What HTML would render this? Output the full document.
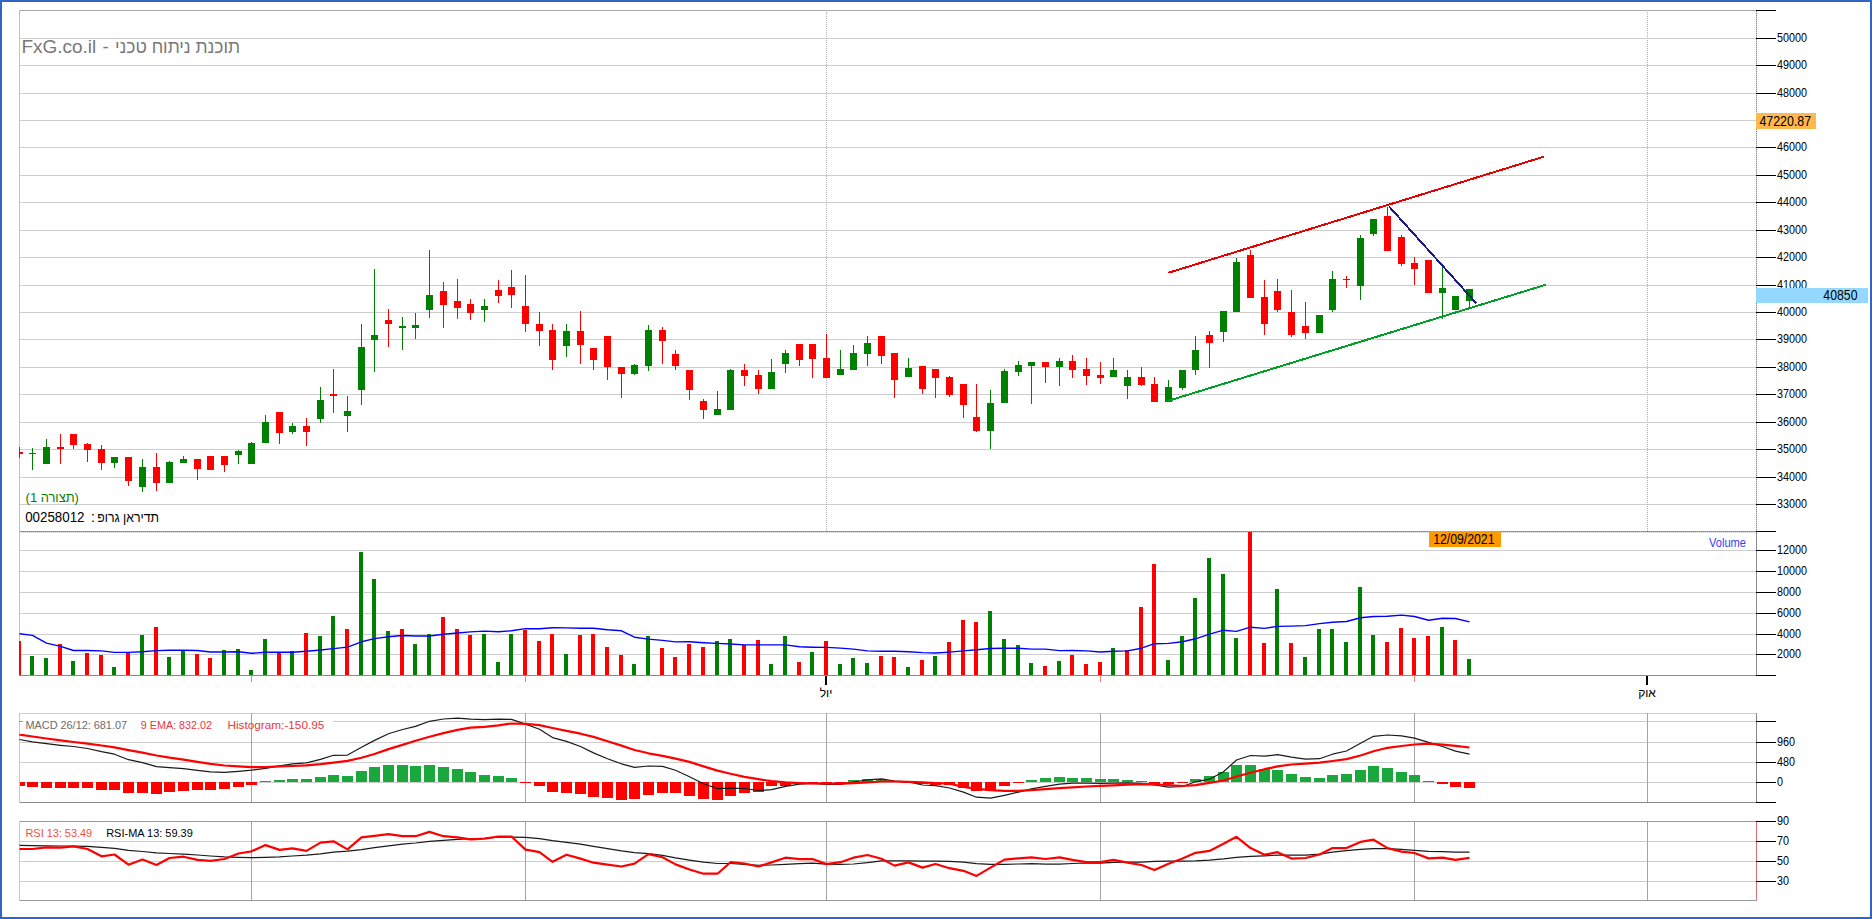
<!DOCTYPE html><html><head><meta charset="utf-8"><title>chart</title><style>html,body{margin:0;padding:0;width:1872px;height:919px;overflow:hidden;background:#fff;}</style></head><body><svg width="1872" height="919" viewBox="0 0 1872 919" style="position:absolute;left:0;top:0;font-family:'Liberation Sans', sans-serif">
<rect x="0" y="0" width="1872" height="919" fill="#ffffff"/>
<g shape-rendering="crispEdges">
<rect x="19" y="38" width="1737" height="1" fill="#cdcdcd"/>
<rect x="19" y="65" width="1737" height="1" fill="#cdcdcd"/>
<rect x="19" y="93" width="1737" height="1" fill="#cdcdcd"/>
<rect x="19" y="120" width="1737" height="1" fill="#cdcdcd"/>
<rect x="19" y="147" width="1737" height="1" fill="#cdcdcd"/>
<rect x="19" y="175" width="1737" height="1" fill="#cdcdcd"/>
<rect x="19" y="202" width="1737" height="1" fill="#cdcdcd"/>
<rect x="19" y="230" width="1737" height="1" fill="#cdcdcd"/>
<rect x="19" y="257" width="1737" height="1" fill="#cdcdcd"/>
<rect x="19" y="285" width="1737" height="1" fill="#cdcdcd"/>
<rect x="19" y="312" width="1737" height="1" fill="#cdcdcd"/>
<rect x="19" y="339" width="1737" height="1" fill="#cdcdcd"/>
<rect x="19" y="367" width="1737" height="1" fill="#cdcdcd"/>
<rect x="19" y="394" width="1737" height="1" fill="#cdcdcd"/>
<rect x="19" y="422" width="1737" height="1" fill="#cdcdcd"/>
<rect x="19" y="449" width="1737" height="1" fill="#cdcdcd"/>
<rect x="19" y="477" width="1737" height="1" fill="#cdcdcd"/>
<rect x="19" y="504" width="1737" height="1" fill="#cdcdcd"/>
<rect x="19" y="10" width="1737" height="1" fill="#a8a8a8"/>
<rect x="19" y="10" width="1" height="521" fill="#c0c0c0"/>
<line x1="826.5" y1="10" x2="826.5" y2="531" stroke="#b0b0b0" stroke-width="1" stroke-dasharray="1 1"/>
<line x1="1647.5" y1="10" x2="1647.5" y2="531" stroke="#b0b0b0" stroke-width="1" stroke-dasharray="1 1"/>
<rect x="1756" y="11" width="1" height="520" fill="#d4d4d4"/>
<line x1="1756.5" y1="11" x2="1756.5" y2="531" stroke="#8a8a8a" stroke-width="1" stroke-dasharray="1 1"/>
<rect x="19" y="531" width="1737" height="1" fill="#a8a8a8"/>
<line x1="19" y1="531.5" x2="1756" y2="531.5" stroke="#808080" stroke-width="1" stroke-dasharray="1 1"/>
<rect x="19" y="532" width="1737" height="1" fill="#e0e0e0"/>
<rect x="19" y="550" width="1737" height="1" fill="#cdcdcd"/>
<rect x="19" y="571" width="1737" height="1" fill="#cdcdcd"/>
<rect x="19" y="592" width="1737" height="1" fill="#cdcdcd"/>
<rect x="19" y="613" width="1737" height="1" fill="#cdcdcd"/>
<rect x="19" y="634" width="1737" height="1" fill="#cdcdcd"/>
<rect x="19" y="654" width="1737" height="1" fill="#cdcdcd"/>
<rect x="19" y="531" width="1" height="145" fill="#c0c0c0"/>
<rect x="1756" y="531" width="1" height="145" fill="#909090"/>
<rect x="19" y="675" width="1738" height="1" fill="#8a8a8a"/>
<rect x="19" y="713" width="1737" height="1" fill="#cfcfcf"/>
<rect x="19" y="802" width="1738" height="1" fill="#8a8a8a"/>
<rect x="19" y="713" width="1" height="90" fill="#c8c8c8"/>
<rect x="1756" y="713" width="1" height="90" fill="#8a8a8a"/>
<rect x="19" y="742" width="1737" height="1" fill="#cdcdcd"/>
<rect x="19" y="762" width="1737" height="1" fill="#cdcdcd"/>
<rect x="19" y="782" width="1737" height="1" fill="#cdcdcd"/>
<rect x="333" y="721" width="1423" height="1" fill="#cdcdcd"/>
<rect x="19" y="721" width="4" height="1" fill="#9a9a9a"/>
<rect x="251" y="713" width="1" height="89" fill="#a4a4a4"/>
<rect x="525" y="713" width="1" height="89" fill="#a4a4a4"/>
<rect x="826" y="713" width="1" height="89" fill="#a4a4a4"/>
<rect x="1100" y="713" width="1" height="89" fill="#a4a4a4"/>
<rect x="1414" y="713" width="1" height="89" fill="#a4a4a4"/>
<rect x="1647" y="713" width="1" height="89" fill="#a4a4a4"/>
<rect x="19" y="821" width="1737" height="1" fill="#9a9a9a"/>
<rect x="19" y="900" width="1738" height="1" fill="#9a9a9a"/>
<rect x="19" y="821" width="1" height="80" fill="#c8c8c8"/>
<rect x="1756" y="821" width="1" height="79" fill="#e07070"/>
<rect x="19" y="841" width="1737" height="1" fill="#cdcdcd"/>
<rect x="19" y="861" width="1737" height="1" fill="#cdcdcd"/>
<rect x="19" y="881" width="1737" height="1" fill="#cdcdcd"/>
<rect x="251" y="821" width="1" height="79" fill="#a4a4a4"/>
<rect x="525" y="821" width="1" height="79" fill="#a4a4a4"/>
<rect x="826" y="821" width="1" height="79" fill="#a4a4a4"/>
<rect x="1100" y="821" width="1" height="79" fill="#a4a4a4"/>
<rect x="1414" y="821" width="1" height="79" fill="#a4a4a4"/>
<rect x="1647" y="821" width="1" height="79" fill="#a4a4a4"/>
<rect x="1756" y="10" width="20" height="1" fill="#000000"/>
<rect x="1756" y="38" width="20" height="1" fill="#000000"/>
<rect x="1756" y="65" width="20" height="1" fill="#000000"/>
<rect x="1756" y="93" width="20" height="1" fill="#000000"/>
<rect x="1756" y="120" width="20" height="1" fill="#000000"/>
<rect x="1756" y="147" width="20" height="1" fill="#000000"/>
<rect x="1756" y="175" width="20" height="1" fill="#000000"/>
<rect x="1756" y="202" width="20" height="1" fill="#000000"/>
<rect x="1756" y="230" width="20" height="1" fill="#000000"/>
<rect x="1756" y="257" width="20" height="1" fill="#000000"/>
<rect x="1756" y="285" width="20" height="1" fill="#000000"/>
<rect x="1756" y="312" width="20" height="1" fill="#000000"/>
<rect x="1756" y="339" width="20" height="1" fill="#000000"/>
<rect x="1756" y="367" width="20" height="1" fill="#000000"/>
<rect x="1756" y="394" width="20" height="1" fill="#000000"/>
<rect x="1756" y="422" width="20" height="1" fill="#000000"/>
<rect x="1756" y="449" width="20" height="1" fill="#000000"/>
<rect x="1756" y="477" width="20" height="1" fill="#000000"/>
<rect x="1756" y="504" width="20" height="1" fill="#000000"/>
<rect x="1756" y="531" width="20" height="1" fill="#000000"/>
<rect x="1756" y="550" width="20" height="1" fill="#000000"/>
<rect x="1756" y="571" width="20" height="1" fill="#000000"/>
<rect x="1756" y="592" width="20" height="1" fill="#000000"/>
<rect x="1756" y="613" width="20" height="1" fill="#000000"/>
<rect x="1756" y="634" width="20" height="1" fill="#000000"/>
<rect x="1756" y="654" width="20" height="1" fill="#000000"/>
<rect x="1756" y="675" width="20" height="1" fill="#000000"/>
<rect x="1756" y="721" width="20" height="1" fill="#000000"/>
<rect x="1756" y="742" width="20" height="1" fill="#000000"/>
<rect x="1756" y="762" width="20" height="1" fill="#000000"/>
<rect x="1756" y="782" width="20" height="1" fill="#000000"/>
<rect x="1756" y="802" width="20" height="1" fill="#000000"/>
<rect x="1756" y="821" width="20" height="1" fill="#000000"/>
<rect x="1756" y="841" width="20" height="1" fill="#000000"/>
<rect x="1756" y="861" width="20" height="1" fill="#000000"/>
<rect x="1756" y="881" width="20" height="1" fill="#000000"/>
<rect x="251" y="676" width="1" height="6" fill="#f08080"/>
<rect x="525" y="676" width="1" height="6" fill="#f08080"/>
<rect x="1100" y="676" width="1" height="6" fill="#f08080"/>
<rect x="1414" y="676" width="1" height="6" fill="#f08080"/>
<rect x="825" y="676" width="2" height="9" fill="#000000"/>
<rect x="1646" y="676" width="2" height="9" fill="#000000"/>
<rect x="19" y="641" width="2" height="34" fill="#ff0000"/>
<rect x="30" y="656" width="4" height="19" fill="#008000"/>
<rect x="44" y="658" width="4" height="17" fill="#008000"/>
<rect x="58" y="644" width="4" height="31" fill="#ff0000"/>
<rect x="71" y="661" width="4" height="14" fill="#008000"/>
<rect x="85" y="653" width="4" height="22" fill="#ff0000"/>
<rect x="99" y="655" width="4" height="20" fill="#ff0000"/>
<rect x="112" y="667" width="4" height="8" fill="#008000"/>
<rect x="126" y="653" width="4" height="22" fill="#ff0000"/>
<rect x="140" y="635" width="4" height="40" fill="#008000"/>
<rect x="154" y="627" width="4" height="48" fill="#ff0000"/>
<rect x="167" y="657" width="4" height="18" fill="#008000"/>
<rect x="181" y="650" width="4" height="25" fill="#008000"/>
<rect x="195" y="654" width="4" height="21" fill="#ff0000"/>
<rect x="208" y="658" width="4" height="17" fill="#ff0000"/>
<rect x="222" y="650" width="4" height="25" fill="#008000"/>
<rect x="236" y="649" width="4" height="26" fill="#008000"/>
<rect x="249" y="670" width="4" height="5" fill="#008000"/>
<rect x="263" y="639" width="4" height="36" fill="#008000"/>
<rect x="277" y="653" width="4" height="22" fill="#ff0000"/>
<rect x="290" y="651" width="4" height="24" fill="#008000"/>
<rect x="304" y="633" width="4" height="42" fill="#ff0000"/>
<rect x="318" y="636" width="4" height="39" fill="#008000"/>
<rect x="331" y="616" width="4" height="59" fill="#008000"/>
<rect x="345" y="629" width="4" height="46" fill="#ff0000"/>
<rect x="359" y="552" width="4" height="123" fill="#008000"/>
<rect x="372" y="579" width="4" height="96" fill="#008000"/>
<rect x="386" y="631" width="4" height="44" fill="#008000"/>
<rect x="400" y="629" width="4" height="46" fill="#ff0000"/>
<rect x="413" y="644" width="4" height="31" fill="#008000"/>
<rect x="427" y="634" width="4" height="41" fill="#008000"/>
<rect x="441" y="617" width="4" height="58" fill="#ff0000"/>
<rect x="455" y="629" width="4" height="46" fill="#ff0000"/>
<rect x="468" y="635" width="4" height="40" fill="#ff0000"/>
<rect x="482" y="634" width="4" height="41" fill="#008000"/>
<rect x="496" y="662" width="4" height="13" fill="#008000"/>
<rect x="509" y="634" width="4" height="41" fill="#008000"/>
<rect x="523" y="630" width="4" height="45" fill="#ff0000"/>
<rect x="537" y="641" width="4" height="34" fill="#ff0000"/>
<rect x="550" y="634" width="4" height="41" fill="#ff0000"/>
<rect x="564" y="654" width="4" height="21" fill="#008000"/>
<rect x="578" y="635" width="4" height="40" fill="#ff0000"/>
<rect x="591" y="634" width="4" height="41" fill="#ff0000"/>
<rect x="605" y="647" width="4" height="28" fill="#ff0000"/>
<rect x="619" y="655" width="4" height="20" fill="#ff0000"/>
<rect x="632" y="664" width="4" height="11" fill="#008000"/>
<rect x="646" y="636" width="4" height="39" fill="#008000"/>
<rect x="660" y="648" width="4" height="27" fill="#ff0000"/>
<rect x="673" y="657" width="4" height="18" fill="#ff0000"/>
<rect x="687" y="644" width="4" height="31" fill="#ff0000"/>
<rect x="701" y="647" width="4" height="28" fill="#ff0000"/>
<rect x="715" y="641" width="4" height="34" fill="#008000"/>
<rect x="728" y="639" width="4" height="36" fill="#008000"/>
<rect x="742" y="645" width="4" height="30" fill="#ff0000"/>
<rect x="756" y="640" width="4" height="35" fill="#ff0000"/>
<rect x="769" y="664" width="4" height="11" fill="#008000"/>
<rect x="783" y="636" width="4" height="39" fill="#008000"/>
<rect x="797" y="662" width="4" height="13" fill="#ff0000"/>
<rect x="810" y="652" width="4" height="23" fill="#008000"/>
<rect x="824" y="641" width="4" height="34" fill="#ff0000"/>
<rect x="838" y="664" width="4" height="11" fill="#008000"/>
<rect x="851" y="658" width="4" height="17" fill="#008000"/>
<rect x="865" y="663" width="4" height="12" fill="#008000"/>
<rect x="879" y="656" width="4" height="19" fill="#ff0000"/>
<rect x="892" y="657" width="4" height="18" fill="#ff0000"/>
<rect x="906" y="667" width="4" height="8" fill="#008000"/>
<rect x="920" y="660" width="4" height="15" fill="#ff0000"/>
<rect x="933" y="656" width="4" height="19" fill="#008000"/>
<rect x="947" y="642" width="4" height="33" fill="#ff0000"/>
<rect x="961" y="620" width="4" height="55" fill="#ff0000"/>
<rect x="974" y="622" width="4" height="53" fill="#ff0000"/>
<rect x="988" y="611" width="4" height="64" fill="#008000"/>
<rect x="1002" y="639" width="4" height="36" fill="#008000"/>
<rect x="1016" y="645" width="4" height="30" fill="#008000"/>
<rect x="1029" y="663" width="4" height="12" fill="#008000"/>
<rect x="1043" y="666" width="4" height="9" fill="#ff0000"/>
<rect x="1057" y="661" width="4" height="14" fill="#008000"/>
<rect x="1070" y="655" width="4" height="20" fill="#ff0000"/>
<rect x="1084" y="664" width="4" height="11" fill="#ff0000"/>
<rect x="1098" y="662" width="4" height="13" fill="#ff0000"/>
<rect x="1111" y="648" width="4" height="27" fill="#008000"/>
<rect x="1125" y="650" width="4" height="25" fill="#ff0000"/>
<rect x="1139" y="607" width="4" height="68" fill="#ff0000"/>
<rect x="1152" y="564" width="4" height="111" fill="#ff0000"/>
<rect x="1166" y="660" width="4" height="15" fill="#008000"/>
<rect x="1180" y="636" width="4" height="39" fill="#008000"/>
<rect x="1193" y="598" width="4" height="77" fill="#008000"/>
<rect x="1207" y="558" width="4" height="117" fill="#008000"/>
<rect x="1221" y="574" width="4" height="101" fill="#008000"/>
<rect x="1234" y="638" width="4" height="37" fill="#008000"/>
<rect x="1248" y="532" width="4" height="143" fill="#ff0000"/>
<rect x="1262" y="643" width="4" height="32" fill="#ff0000"/>
<rect x="1275" y="589" width="4" height="86" fill="#008000"/>
<rect x="1289" y="643" width="4" height="32" fill="#ff0000"/>
<rect x="1303" y="657" width="4" height="18" fill="#008000"/>
<rect x="1317" y="629" width="4" height="46" fill="#008000"/>
<rect x="1330" y="629" width="4" height="46" fill="#008000"/>
<rect x="1344" y="642" width="4" height="33" fill="#008000"/>
<rect x="1358" y="587" width="4" height="88" fill="#008000"/>
<rect x="1371" y="635" width="4" height="40" fill="#008000"/>
<rect x="1385" y="642" width="4" height="33" fill="#ff0000"/>
<rect x="1399" y="628" width="4" height="47" fill="#ff0000"/>
<rect x="1412" y="638" width="4" height="37" fill="#ff0000"/>
<rect x="1426" y="636" width="4" height="39" fill="#ff0000"/>
<rect x="1440" y="627" width="4" height="48" fill="#008000"/>
<rect x="1453" y="640" width="4" height="35" fill="#ff0000"/>
<rect x="1467" y="659" width="4" height="16" fill="#008000"/>
<rect x="20" y="782" width="5" height="4" fill="#ff0000"/>
<rect x="27" y="782" width="11" height="5" fill="#ff0000"/>
<rect x="41" y="782" width="11" height="6" fill="#ff0000"/>
<rect x="55" y="782" width="11" height="6" fill="#ff0000"/>
<rect x="68" y="782" width="11" height="6" fill="#ff0000"/>
<rect x="82" y="782" width="11" height="6" fill="#ff0000"/>
<rect x="96" y="782" width="11" height="8" fill="#ff0000"/>
<rect x="109" y="782" width="11" height="8" fill="#ff0000"/>
<rect x="123" y="782" width="11" height="11" fill="#ff0000"/>
<rect x="137" y="782" width="11" height="11" fill="#ff0000"/>
<rect x="151" y="782" width="11" height="12" fill="#ff0000"/>
<rect x="164" y="782" width="11" height="10" fill="#ff0000"/>
<rect x="178" y="782" width="11" height="9" fill="#ff0000"/>
<rect x="192" y="782" width="11" height="8" fill="#ff0000"/>
<rect x="205" y="782" width="11" height="8" fill="#ff0000"/>
<rect x="219" y="782" width="11" height="7" fill="#ff0000"/>
<rect x="233" y="782" width="11" height="5" fill="#ff0000"/>
<rect x="246" y="782" width="11" height="3" fill="#ff0000"/>
<rect x="260" y="781" width="11" height="1" fill="#1aa83c"/>
<rect x="274" y="780" width="11" height="2" fill="#1aa83c"/>
<rect x="287" y="779" width="11" height="3" fill="#1aa83c"/>
<rect x="301" y="779" width="11" height="3" fill="#1aa83c"/>
<rect x="315" y="777" width="11" height="5" fill="#1aa83c"/>
<rect x="328" y="775" width="11" height="7" fill="#1aa83c"/>
<rect x="342" y="776" width="11" height="6" fill="#1aa83c"/>
<rect x="356" y="771" width="11" height="11" fill="#1aa83c"/>
<rect x="369" y="767" width="11" height="15" fill="#1aa83c"/>
<rect x="383" y="765" width="11" height="17" fill="#1aa83c"/>
<rect x="397" y="765" width="11" height="17" fill="#1aa83c"/>
<rect x="410" y="766" width="11" height="16" fill="#1aa83c"/>
<rect x="424" y="765" width="11" height="17" fill="#1aa83c"/>
<rect x="438" y="767" width="11" height="15" fill="#1aa83c"/>
<rect x="452" y="769" width="11" height="13" fill="#1aa83c"/>
<rect x="465" y="772" width="11" height="10" fill="#1aa83c"/>
<rect x="479" y="775" width="11" height="7" fill="#1aa83c"/>
<rect x="493" y="776" width="11" height="6" fill="#1aa83c"/>
<rect x="506" y="778" width="11" height="4" fill="#1aa83c"/>
<rect x="520" y="782" width="11" height="1" fill="#ff0000"/>
<rect x="534" y="782" width="11" height="4" fill="#ff0000"/>
<rect x="547" y="782" width="11" height="10" fill="#ff0000"/>
<rect x="561" y="782" width="11" height="11" fill="#ff0000"/>
<rect x="575" y="782" width="11" height="12" fill="#ff0000"/>
<rect x="588" y="782" width="11" height="15" fill="#ff0000"/>
<rect x="602" y="782" width="11" height="16" fill="#ff0000"/>
<rect x="616" y="782" width="11" height="18" fill="#ff0000"/>
<rect x="629" y="782" width="11" height="17" fill="#ff0000"/>
<rect x="643" y="782" width="11" height="13" fill="#ff0000"/>
<rect x="657" y="782" width="11" height="11" fill="#ff0000"/>
<rect x="670" y="782" width="11" height="11" fill="#ff0000"/>
<rect x="684" y="782" width="11" height="14" fill="#ff0000"/>
<rect x="698" y="782" width="11" height="17" fill="#ff0000"/>
<rect x="712" y="782" width="11" height="18" fill="#ff0000"/>
<rect x="725" y="782" width="11" height="14" fill="#ff0000"/>
<rect x="739" y="782" width="11" height="11" fill="#ff0000"/>
<rect x="753" y="782" width="11" height="10" fill="#ff0000"/>
<rect x="766" y="782" width="11" height="4" fill="#ff0000"/>
<rect x="780" y="782" width="11" height="4" fill="#ff0000"/>
<rect x="794" y="782" width="11" height="2" fill="#ff0000"/>
<rect x="807" y="782" width="11" height="2" fill="#ff0000"/>
<rect x="821" y="782" width="11" height="2" fill="#ff0000"/>
<rect x="835" y="782" width="11" height="2" fill="#ff0000"/>
<rect x="848" y="780" width="11" height="2" fill="#1aa83c"/>
<rect x="862" y="779" width="11" height="3" fill="#1aa83c"/>
<rect x="876" y="779" width="11" height="3" fill="#1aa83c"/>
<rect x="903" y="782" width="11" height="1" fill="#ff0000"/>
<rect x="917" y="782" width="11" height="2" fill="#ff0000"/>
<rect x="930" y="782" width="11" height="3" fill="#ff0000"/>
<rect x="944" y="782" width="11" height="3" fill="#ff0000"/>
<rect x="958" y="782" width="11" height="6" fill="#ff0000"/>
<rect x="971" y="782" width="11" height="9" fill="#ff0000"/>
<rect x="985" y="782" width="11" height="8" fill="#ff0000"/>
<rect x="999" y="782" width="11" height="4" fill="#ff0000"/>
<rect x="1013" y="782" width="11" height="1" fill="#ff0000"/>
<rect x="1026" y="780" width="11" height="2" fill="#1aa83c"/>
<rect x="1040" y="778" width="11" height="4" fill="#1aa83c"/>
<rect x="1054" y="777" width="11" height="5" fill="#1aa83c"/>
<rect x="1067" y="778" width="11" height="4" fill="#1aa83c"/>
<rect x="1081" y="778" width="11" height="4" fill="#1aa83c"/>
<rect x="1095" y="779" width="11" height="3" fill="#1aa83c"/>
<rect x="1108" y="779" width="11" height="3" fill="#1aa83c"/>
<rect x="1122" y="780" width="11" height="2" fill="#1aa83c"/>
<rect x="1136" y="781" width="11" height="1" fill="#1aa83c"/>
<rect x="1149" y="782" width="11" height="2" fill="#ff0000"/>
<rect x="1163" y="782" width="11" height="2" fill="#ff0000"/>
<rect x="1177" y="782" width="11" height="1" fill="#ff0000"/>
<rect x="1190" y="779" width="11" height="3" fill="#1aa83c"/>
<rect x="1204" y="776" width="11" height="6" fill="#1aa83c"/>
<rect x="1218" y="772" width="11" height="10" fill="#1aa83c"/>
<rect x="1231" y="765" width="11" height="17" fill="#1aa83c"/>
<rect x="1245" y="765" width="11" height="17" fill="#1aa83c"/>
<rect x="1259" y="769" width="11" height="13" fill="#1aa83c"/>
<rect x="1272" y="770" width="11" height="12" fill="#1aa83c"/>
<rect x="1286" y="774" width="11" height="8" fill="#1aa83c"/>
<rect x="1300" y="777" width="11" height="5" fill="#1aa83c"/>
<rect x="1314" y="778" width="11" height="4" fill="#1aa83c"/>
<rect x="1327" y="775" width="11" height="7" fill="#1aa83c"/>
<rect x="1341" y="774" width="11" height="8" fill="#1aa83c"/>
<rect x="1355" y="770" width="11" height="12" fill="#1aa83c"/>
<rect x="1368" y="766" width="11" height="16" fill="#1aa83c"/>
<rect x="1382" y="768" width="11" height="14" fill="#1aa83c"/>
<rect x="1396" y="772" width="11" height="10" fill="#1aa83c"/>
<rect x="1409" y="775" width="11" height="7" fill="#1aa83c"/>
<rect x="1423" y="781" width="11" height="1" fill="#1aa83c"/>
<rect x="1437" y="782" width="11" height="2" fill="#ff0000"/>
<rect x="1450" y="782" width="11" height="5" fill="#ff0000"/>
<rect x="1464" y="782" width="11" height="6" fill="#ff0000"/>
<rect x="19" y="447" width="1" height="11" fill="#ff0000"/>
<rect x="19" y="452" width="4" height="2" fill="#ff0000"/>
<rect x="32" y="448" width="1" height="22" fill="#008000"/>
<rect x="29" y="453" width="7" height="1" fill="#008000"/>
<rect x="46" y="439" width="1" height="25" fill="#008000"/>
<rect x="43" y="447" width="7" height="17" fill="#008000"/>
<rect x="60" y="434" width="1" height="30" fill="#ff0000"/>
<rect x="57" y="447" width="7" height="2" fill="#ff0000"/>
<rect x="73" y="434" width="1" height="15" fill="#ff0000"/>
<rect x="70" y="434" width="7" height="11" fill="#ff0000"/>
<rect x="87" y="443" width="1" height="19" fill="#ff0000"/>
<rect x="84" y="444" width="7" height="6" fill="#ff0000"/>
<rect x="101" y="445" width="1" height="25" fill="#ff0000"/>
<rect x="98" y="449" width="7" height="14" fill="#ff0000"/>
<rect x="114" y="457" width="1" height="11" fill="#008000"/>
<rect x="111" y="457" width="7" height="6" fill="#008000"/>
<rect x="128" y="457" width="1" height="29" fill="#ff0000"/>
<rect x="125" y="457" width="7" height="24" fill="#ff0000"/>
<rect x="142" y="459" width="1" height="33" fill="#008000"/>
<rect x="139" y="467" width="7" height="20" fill="#008000"/>
<rect x="156" y="453" width="1" height="38" fill="#ff0000"/>
<rect x="153" y="467" width="7" height="16" fill="#ff0000"/>
<rect x="169" y="461" width="1" height="22" fill="#008000"/>
<rect x="166" y="462" width="7" height="21" fill="#008000"/>
<rect x="183" y="456" width="1" height="7" fill="#008000"/>
<rect x="180" y="459" width="7" height="4" fill="#008000"/>
<rect x="197" y="459" width="1" height="21" fill="#ff0000"/>
<rect x="194" y="459" width="7" height="10" fill="#ff0000"/>
<rect x="210" y="456" width="1" height="14" fill="#ff0000"/>
<rect x="207" y="456" width="7" height="14" fill="#ff0000"/>
<rect x="224" y="456" width="1" height="16" fill="#ff0000"/>
<rect x="221" y="456" width="7" height="9" fill="#ff0000"/>
<rect x="238" y="450" width="1" height="14" fill="#008000"/>
<rect x="235" y="451" width="7" height="4" fill="#008000"/>
<rect x="251" y="442" width="1" height="22" fill="#008000"/>
<rect x="248" y="443" width="7" height="21" fill="#008000"/>
<rect x="265" y="415" width="1" height="28" fill="#008000"/>
<rect x="262" y="422" width="7" height="21" fill="#008000"/>
<rect x="279" y="412" width="1" height="32" fill="#ff0000"/>
<rect x="276" y="412" width="7" height="21" fill="#ff0000"/>
<rect x="292" y="423" width="1" height="11" fill="#008000"/>
<rect x="289" y="426" width="7" height="6" fill="#008000"/>
<rect x="306" y="418" width="1" height="28" fill="#ff0000"/>
<rect x="303" y="426" width="7" height="6" fill="#ff0000"/>
<rect x="320" y="387" width="1" height="36" fill="#008000"/>
<rect x="317" y="400" width="7" height="19" fill="#008000"/>
<rect x="333" y="369" width="1" height="44" fill="#ff0000"/>
<rect x="330" y="394" width="7" height="2" fill="#ff0000"/>
<rect x="347" y="396" width="1" height="36" fill="#008000"/>
<rect x="344" y="411" width="7" height="5" fill="#008000"/>
<rect x="361" y="324" width="1" height="81" fill="#008000"/>
<rect x="358" y="347" width="7" height="43" fill="#008000"/>
<rect x="374" y="269" width="1" height="103" fill="#008000"/>
<rect x="371" y="335" width="7" height="5" fill="#008000"/>
<rect x="388" y="309" width="1" height="38" fill="#ff0000"/>
<rect x="385" y="320" width="7" height="4" fill="#ff0000"/>
<rect x="402" y="317" width="1" height="33" fill="#008000"/>
<rect x="399" y="326" width="7" height="2" fill="#008000"/>
<rect x="415" y="313" width="1" height="26" fill="#008000"/>
<rect x="412" y="325" width="7" height="3" fill="#008000"/>
<rect x="429" y="250" width="1" height="68" fill="#008000"/>
<rect x="426" y="295" width="7" height="15" fill="#008000"/>
<rect x="443" y="282" width="1" height="46" fill="#ff0000"/>
<rect x="440" y="291" width="7" height="14" fill="#ff0000"/>
<rect x="457" y="279" width="1" height="40" fill="#ff0000"/>
<rect x="454" y="301" width="7" height="7" fill="#ff0000"/>
<rect x="470" y="299" width="1" height="21" fill="#ff0000"/>
<rect x="467" y="304" width="7" height="9" fill="#ff0000"/>
<rect x="484" y="299" width="1" height="23" fill="#008000"/>
<rect x="481" y="306" width="7" height="4" fill="#008000"/>
<rect x="498" y="280" width="1" height="23" fill="#ff0000"/>
<rect x="495" y="290" width="7" height="6" fill="#ff0000"/>
<rect x="511" y="270" width="1" height="38" fill="#ff0000"/>
<rect x="508" y="287" width="7" height="8" fill="#ff0000"/>
<rect x="525" y="275" width="1" height="57" fill="#ff0000"/>
<rect x="522" y="306" width="7" height="18" fill="#ff0000"/>
<rect x="539" y="312" width="1" height="34" fill="#ff0000"/>
<rect x="536" y="324" width="7" height="7" fill="#ff0000"/>
<rect x="552" y="324" width="1" height="46" fill="#ff0000"/>
<rect x="549" y="330" width="7" height="30" fill="#ff0000"/>
<rect x="566" y="324" width="1" height="33" fill="#008000"/>
<rect x="563" y="331" width="7" height="15" fill="#008000"/>
<rect x="580" y="311" width="1" height="53" fill="#ff0000"/>
<rect x="577" y="331" width="7" height="14" fill="#ff0000"/>
<rect x="593" y="348" width="1" height="22" fill="#ff0000"/>
<rect x="590" y="348" width="7" height="12" fill="#ff0000"/>
<rect x="607" y="336" width="1" height="44" fill="#ff0000"/>
<rect x="604" y="336" width="7" height="31" fill="#ff0000"/>
<rect x="621" y="367" width="1" height="31" fill="#ff0000"/>
<rect x="618" y="367" width="7" height="7" fill="#ff0000"/>
<rect x="634" y="364" width="1" height="11" fill="#008000"/>
<rect x="631" y="365" width="7" height="9" fill="#008000"/>
<rect x="648" y="325" width="1" height="46" fill="#008000"/>
<rect x="645" y="330" width="7" height="36" fill="#008000"/>
<rect x="662" y="327" width="1" height="37" fill="#ff0000"/>
<rect x="659" y="330" width="7" height="11" fill="#ff0000"/>
<rect x="675" y="350" width="1" height="20" fill="#ff0000"/>
<rect x="672" y="354" width="7" height="12" fill="#ff0000"/>
<rect x="689" y="370" width="1" height="30" fill="#ff0000"/>
<rect x="686" y="370" width="7" height="20" fill="#ff0000"/>
<rect x="703" y="399" width="1" height="20" fill="#ff0000"/>
<rect x="700" y="401" width="7" height="9" fill="#ff0000"/>
<rect x="717" y="391" width="1" height="24" fill="#008000"/>
<rect x="714" y="409" width="7" height="6" fill="#008000"/>
<rect x="730" y="369" width="1" height="41" fill="#008000"/>
<rect x="727" y="370" width="7" height="40" fill="#008000"/>
<rect x="744" y="364" width="1" height="22" fill="#ff0000"/>
<rect x="741" y="370" width="7" height="6" fill="#ff0000"/>
<rect x="758" y="370" width="1" height="24" fill="#ff0000"/>
<rect x="755" y="375" width="7" height="14" fill="#ff0000"/>
<rect x="771" y="359" width="1" height="30" fill="#008000"/>
<rect x="768" y="372" width="7" height="17" fill="#008000"/>
<rect x="785" y="350" width="1" height="23" fill="#008000"/>
<rect x="782" y="353" width="7" height="11" fill="#008000"/>
<rect x="799" y="344" width="1" height="22" fill="#ff0000"/>
<rect x="796" y="344" width="7" height="16" fill="#ff0000"/>
<rect x="812" y="344" width="1" height="34" fill="#ff0000"/>
<rect x="809" y="344" width="7" height="15" fill="#ff0000"/>
<rect x="826" y="334" width="1" height="44" fill="#ff0000"/>
<rect x="823" y="358" width="7" height="20" fill="#ff0000"/>
<rect x="840" y="350" width="1" height="25" fill="#008000"/>
<rect x="837" y="369" width="7" height="6" fill="#008000"/>
<rect x="853" y="345" width="1" height="25" fill="#008000"/>
<rect x="850" y="353" width="7" height="17" fill="#008000"/>
<rect x="867" y="336" width="1" height="30" fill="#008000"/>
<rect x="864" y="343" width="7" height="11" fill="#008000"/>
<rect x="881" y="336" width="1" height="28" fill="#ff0000"/>
<rect x="878" y="336" width="7" height="20" fill="#ff0000"/>
<rect x="894" y="353" width="1" height="45" fill="#ff0000"/>
<rect x="891" y="353" width="7" height="27" fill="#ff0000"/>
<rect x="908" y="358" width="1" height="19" fill="#008000"/>
<rect x="905" y="368" width="7" height="9" fill="#008000"/>
<rect x="922" y="366" width="1" height="28" fill="#ff0000"/>
<rect x="919" y="366" width="7" height="23" fill="#ff0000"/>
<rect x="935" y="369" width="1" height="29" fill="#ff0000"/>
<rect x="932" y="369" width="7" height="9" fill="#ff0000"/>
<rect x="949" y="376" width="1" height="21" fill="#ff0000"/>
<rect x="946" y="377" width="7" height="18" fill="#ff0000"/>
<rect x="963" y="384" width="1" height="34" fill="#ff0000"/>
<rect x="960" y="384" width="7" height="21" fill="#ff0000"/>
<rect x="976" y="384" width="1" height="48" fill="#ff0000"/>
<rect x="973" y="417" width="7" height="14" fill="#ff0000"/>
<rect x="990" y="390" width="1" height="59" fill="#008000"/>
<rect x="987" y="403" width="7" height="28" fill="#008000"/>
<rect x="1004" y="369" width="1" height="34" fill="#008000"/>
<rect x="1001" y="371" width="7" height="32" fill="#008000"/>
<rect x="1018" y="361" width="1" height="15" fill="#008000"/>
<rect x="1015" y="365" width="7" height="7" fill="#008000"/>
<rect x="1031" y="362" width="1" height="42" fill="#008000"/>
<rect x="1028" y="362" width="7" height="4" fill="#008000"/>
<rect x="1045" y="362" width="1" height="21" fill="#ff0000"/>
<rect x="1042" y="362" width="7" height="5" fill="#ff0000"/>
<rect x="1059" y="358" width="1" height="28" fill="#008000"/>
<rect x="1056" y="361" width="7" height="6" fill="#008000"/>
<rect x="1072" y="355" width="1" height="23" fill="#ff0000"/>
<rect x="1069" y="361" width="7" height="9" fill="#ff0000"/>
<rect x="1086" y="358" width="1" height="27" fill="#ff0000"/>
<rect x="1083" y="369" width="7" height="7" fill="#ff0000"/>
<rect x="1100" y="362" width="1" height="22" fill="#ff0000"/>
<rect x="1097" y="375" width="7" height="3" fill="#ff0000"/>
<rect x="1113" y="358" width="1" height="19" fill="#008000"/>
<rect x="1110" y="370" width="7" height="7" fill="#008000"/>
<rect x="1127" y="370" width="1" height="29" fill="#008000"/>
<rect x="1124" y="377" width="7" height="9" fill="#008000"/>
<rect x="1141" y="367" width="1" height="19" fill="#ff0000"/>
<rect x="1138" y="377" width="7" height="8" fill="#ff0000"/>
<rect x="1154" y="377" width="1" height="25" fill="#ff0000"/>
<rect x="1151" y="384" width="7" height="18" fill="#ff0000"/>
<rect x="1168" y="380" width="1" height="22" fill="#008000"/>
<rect x="1165" y="387" width="7" height="15" fill="#008000"/>
<rect x="1182" y="370" width="1" height="20" fill="#008000"/>
<rect x="1179" y="370" width="7" height="18" fill="#008000"/>
<rect x="1195" y="336" width="1" height="39" fill="#008000"/>
<rect x="1192" y="350" width="7" height="20" fill="#008000"/>
<rect x="1209" y="331" width="1" height="37" fill="#ff0000"/>
<rect x="1206" y="335" width="7" height="8" fill="#ff0000"/>
<rect x="1223" y="311" width="1" height="31" fill="#008000"/>
<rect x="1220" y="311" width="7" height="21" fill="#008000"/>
<rect x="1236" y="258" width="1" height="54" fill="#008000"/>
<rect x="1233" y="262" width="7" height="50" fill="#008000"/>
<rect x="1250" y="250" width="1" height="48" fill="#ff0000"/>
<rect x="1247" y="255" width="7" height="43" fill="#ff0000"/>
<rect x="1264" y="280" width="1" height="55" fill="#ff0000"/>
<rect x="1261" y="297" width="7" height="27" fill="#ff0000"/>
<rect x="1277" y="279" width="1" height="33" fill="#ff0000"/>
<rect x="1274" y="291" width="7" height="19" fill="#ff0000"/>
<rect x="1291" y="290" width="1" height="47" fill="#ff0000"/>
<rect x="1288" y="312" width="7" height="23" fill="#ff0000"/>
<rect x="1305" y="302" width="1" height="37" fill="#ff0000"/>
<rect x="1302" y="326" width="7" height="7" fill="#ff0000"/>
<rect x="1319" y="315" width="1" height="18" fill="#008000"/>
<rect x="1316" y="315" width="7" height="18" fill="#008000"/>
<rect x="1332" y="271" width="1" height="41" fill="#008000"/>
<rect x="1329" y="279" width="7" height="31" fill="#008000"/>
<rect x="1346" y="276" width="1" height="12" fill="#ff0000"/>
<rect x="1343" y="279" width="7" height="1" fill="#ff0000"/>
<rect x="1360" y="235" width="1" height="65" fill="#008000"/>
<rect x="1357" y="238" width="7" height="48" fill="#008000"/>
<rect x="1373" y="219" width="1" height="17" fill="#008000"/>
<rect x="1370" y="219" width="7" height="15" fill="#008000"/>
<rect x="1387" y="207" width="1" height="44" fill="#ff0000"/>
<rect x="1384" y="216" width="7" height="35" fill="#ff0000"/>
<rect x="1401" y="235" width="1" height="31" fill="#ff0000"/>
<rect x="1398" y="237" width="7" height="27" fill="#ff0000"/>
<rect x="1414" y="257" width="1" height="28" fill="#ff0000"/>
<rect x="1411" y="263" width="7" height="6" fill="#ff0000"/>
<rect x="1428" y="260" width="1" height="33" fill="#ff0000"/>
<rect x="1425" y="260" width="7" height="33" fill="#ff0000"/>
<rect x="1442" y="264" width="1" height="55" fill="#008000"/>
<rect x="1439" y="288" width="7" height="5" fill="#008000"/>
<rect x="1455" y="296" width="1" height="14" fill="#008000"/>
<rect x="1452" y="296" width="7" height="14" fill="#008000"/>
<rect x="1469" y="289" width="1" height="18" fill="#008000"/>
<rect x="1466" y="289" width="7" height="12" fill="#008000"/>
</g>
<polyline points="19.5,633.7 32.5,635.4 46.5,643.1 60.5,646.4 73.5,650.5 87.5,650.5 101.5,650.9 114.5,652.4 128.5,652.4 142.5,651.8 156.5,650.6 169.5,650.3 183.5,650.3 197.5,650.5 210.5,652.0 224.5,652.0 238.5,651.8 251.5,653.3 265.5,652.3 279.5,652.3 292.5,652.3 306.5,651.2 320.5,650.0 333.5,648.6 347.5,647.1 361.5,641.8 374.5,638.6 388.5,636.8 402.5,635.5 415.5,636.0 429.5,636.0 443.5,634.2 457.5,633.0 470.5,631.9 484.5,631.1 498.5,631.8 511.5,630.8 525.5,628.6 539.5,628.8 552.5,627.8 566.5,627.9 580.5,628.2 593.5,628.2 607.5,629.7 621.5,630.8 634.5,637.2 648.5,639.1 662.5,640.4 675.5,641.9 689.5,641.7 703.5,642.7 717.5,643.4 730.5,644.0 744.5,644.9 758.5,644.9 771.5,644.9 785.5,644.9 799.5,646.8 812.5,647.2 826.5,647.4 840.5,648.1 853.5,649.1 867.5,650.9 881.5,651.3 894.5,651.3 908.5,651.7 922.5,652.6 935.5,653.0 949.5,652.1 963.5,650.9 976.5,649.8 990.5,648.5 1004.5,648.2 1018.5,648.2 1031.5,649.1 1045.5,649.1 1059.5,650.6 1072.5,650.5 1086.5,650.9 1100.5,652.0 1113.5,651.2 1127.5,650.9 1141.5,648.2 1154.5,643.7 1168.5,643.4 1182.5,641.7 1195.5,638.8 1209.5,634.2 1223.5,630.2 1236.5,631.4 1250.5,627.2 1264.5,628.4 1277.5,626.4 1291.5,626.1 1305.5,625.6 1319.5,623.6 1332.5,622.3 1346.5,621.5 1360.5,617.8 1373.5,616.5 1387.5,616.2 1401.5,615.1 1414.5,616.5 1428.5,620.3 1442.5,618.3 1455.5,618.5 1469.5,621.9" fill="none" stroke="#0000ff" stroke-width="1.4" stroke-linejoin="round" />
<polyline points="19.5,739.5 32.5,741.8 46.5,743.7 60.5,745.3 73.5,746.5 87.5,748.5 101.5,751.7 114.5,754.2 128.5,759.7 142.5,762.6 156.5,766.7 169.5,767.7 183.5,768.7 197.5,770.3 210.5,771.8 224.5,772.4 238.5,771.3 251.5,770.2 265.5,768.3 279.5,765.8 292.5,763.8 306.5,762.8 320.5,759.4 333.5,755.3 347.5,755.1 361.5,747.2 374.5,740.4 388.5,733.7 402.5,729.5 415.5,726.4 429.5,721.3 443.5,719.0 457.5,718.1 470.5,719.2 484.5,719.6 498.5,719.2 511.5,719.4 525.5,724.1 539.5,729.2 552.5,737.6 566.5,741.4 580.5,746.5 593.5,752.9 607.5,758.7 621.5,763.8 634.5,767.4 648.5,766.0 662.5,766.4 675.5,770.3 689.5,776.7 703.5,783.7 717.5,788.6 730.5,788.2 744.5,788.5 758.5,790.5 771.5,789.7 785.5,786.3 799.5,784.1 812.5,783.3 826.5,784.4 840.5,784.4 853.5,782.0 867.5,779.9 881.5,778.8 894.5,781.2 908.5,781.8 922.5,785.0 935.5,785.6 949.5,788.0 963.5,792.1 976.5,797.2 990.5,798.2 1004.5,795.3 1018.5,792.1 1031.5,788.8 1045.5,786.3 1059.5,784.1 1072.5,783.1 1086.5,783.1 1100.5,783.3 1113.5,783.1 1127.5,782.8 1141.5,783.3 1154.5,785.0 1168.5,787.2 1182.5,786.5 1195.5,781.8 1209.5,779.2 1223.5,771.8 1236.5,760.0 1250.5,755.5 1264.5,756.2 1277.5,754.6 1291.5,757.2 1305.5,759.1 1319.5,758.7 1332.5,754.2 1346.5,751.0 1360.5,743.3 1373.5,736.3 1387.5,735.0 1401.5,735.9 1414.5,738.1 1428.5,742.4 1442.5,746.5 1455.5,751.1 1469.5,754.1" fill="none" stroke="#1a1a1a" stroke-width="1.2" stroke-linejoin="round" />
<polyline points="19.5,734.7 32.5,736.5 46.5,738.5 60.5,740.4 73.5,742.0 87.5,743.6 101.5,745.5 114.5,747.4 128.5,750.1 142.5,752.7 156.5,755.5 169.5,757.7 183.5,759.7 197.5,761.9 210.5,763.8 224.5,765.5 238.5,766.4 251.5,767.2 265.5,767.1 279.5,766.4 292.5,766.0 306.5,765.4 320.5,764.1 333.5,762.6 347.5,760.9 361.5,757.7 374.5,754.0 388.5,749.1 402.5,744.9 415.5,740.8 429.5,736.7 443.5,733.1 457.5,729.9 470.5,727.7 484.5,726.8 498.5,725.4 511.5,723.5 525.5,723.8 539.5,725.1 552.5,728.0 566.5,730.8 580.5,733.7 593.5,736.9 607.5,741.2 621.5,745.6 634.5,750.0 648.5,753.3 662.5,755.9 675.5,758.7 689.5,761.9 703.5,766.4 717.5,770.6 730.5,773.7 744.5,776.9 758.5,779.2 771.5,781.2 785.5,782.4 799.5,783.1 812.5,783.3 826.5,783.5 840.5,783.7 853.5,783.1 867.5,782.4 881.5,781.5 894.5,781.5 908.5,781.8 922.5,782.4 935.5,783.1 949.5,783.7 963.5,786.9 976.5,788.8 990.5,790.1 1004.5,790.8 1018.5,790.8 1031.5,790.1 1045.5,789.2 1059.5,788.2 1072.5,787.3 1086.5,786.5 1100.5,785.9 1113.5,785.3 1127.5,784.6 1141.5,784.1 1154.5,784.4 1168.5,785.0 1182.5,786.0 1195.5,785.2 1209.5,782.8 1223.5,780.5 1236.5,776.5 1250.5,772.8 1264.5,769.2 1277.5,766.4 1291.5,764.5 1305.5,763.6 1319.5,762.6 1332.5,761.0 1346.5,759.1 1360.5,755.5 1373.5,751.3 1387.5,747.8 1401.5,746.0 1414.5,744.5 1428.5,743.7 1442.5,744.6 1455.5,745.9 1469.5,747.5" fill="none" stroke="#ff0000" stroke-width="2.2" stroke-linejoin="round" />
<polyline points="19.5,845.4 32.5,845.6 46.5,845.8 60.5,846.0 73.5,846.2 87.5,846.4 101.5,847.3 114.5,848.3 128.5,850.3 142.5,851.5 156.5,852.8 169.5,853.5 183.5,854.1 197.5,855.0 210.5,856.0 224.5,856.9 238.5,857.3 251.5,857.7 265.5,857.3 279.5,856.9 292.5,856.0 306.5,855.1 320.5,853.8 333.5,852.2 347.5,851.2 361.5,849.6 374.5,847.7 388.5,845.8 402.5,844.2 415.5,843.0 429.5,841.3 443.5,840.4 457.5,839.4 470.5,838.7 484.5,838.3 498.5,837.1 511.5,837.2 525.5,837.4 539.5,838.7 552.5,840.6 566.5,842.3 580.5,844.2 593.5,846.4 607.5,848.7 621.5,850.9 634.5,852.6 648.5,853.7 662.5,855.4 675.5,857.9 689.5,860.1 703.5,862.2 717.5,863.5 730.5,863.5 744.5,864.4 758.5,865.3 771.5,865.0 785.5,864.4 799.5,863.7 812.5,863.1 826.5,864.1 840.5,864.4 853.5,864.0 867.5,862.7 881.5,860.9 894.5,860.9 908.5,860.9 922.5,861.2 935.5,861.2 949.5,861.4 963.5,862.2 976.5,863.7 990.5,864.4 1004.5,864.4 1018.5,864.0 1031.5,863.7 1045.5,864.1 1059.5,864.1 1072.5,863.5 1086.5,862.8 1100.5,863.1 1113.5,862.4 1127.5,862.2 1141.5,862.2 1154.5,861.4 1168.5,861.2 1182.5,861.2 1195.5,860.9 1209.5,860.1 1223.5,858.8 1236.5,857.3 1250.5,856.3 1264.5,855.8 1277.5,855.1 1291.5,855.1 1305.5,855.1 1319.5,854.1 1332.5,852.2 1346.5,850.6 1360.5,849.4 1373.5,848.6 1387.5,848.6 1401.5,849.4 1414.5,850.4 1428.5,851.4 1442.5,851.7 1455.5,852.2 1469.5,852.2" fill="none" stroke="#1a1a1a" stroke-width="1.2" stroke-linejoin="round" />
<polyline points="19.5,849.0 32.5,849.0 46.5,847.3 60.5,847.7 73.5,846.4 87.5,849.0 101.5,856.3 114.5,854.5 128.5,864.7 142.5,859.5 156.5,865.0 169.5,858.0 183.5,856.7 197.5,859.9 210.5,860.9 224.5,859.0 238.5,853.5 251.5,851.3 265.5,845.1 279.5,849.9 292.5,848.3 306.5,850.9 320.5,842.6 333.5,841.3 347.5,849.4 361.5,837.4 374.5,835.8 388.5,834.2 402.5,836.2 415.5,836.2 429.5,831.9 443.5,836.2 457.5,837.4 470.5,839.4 484.5,838.7 498.5,836.5 511.5,836.5 525.5,849.6 539.5,852.2 552.5,861.8 566.5,854.7 580.5,858.6 593.5,862.7 607.5,864.7 621.5,866.5 634.5,863.7 648.5,854.1 662.5,857.3 675.5,864.4 689.5,869.5 703.5,873.7 717.5,873.7 730.5,862.2 744.5,863.5 758.5,866.5 771.5,862.4 785.5,857.7 799.5,859.2 812.5,859.0 826.5,864.1 840.5,862.2 853.5,857.7 867.5,855.0 881.5,858.8 894.5,865.6 908.5,862.4 922.5,867.6 935.5,864.0 949.5,868.2 963.5,870.8 976.5,875.9 990.5,867.6 1004.5,859.6 1018.5,858.3 1031.5,857.3 1045.5,859.0 1059.5,857.3 1072.5,859.9 1086.5,862.2 1100.5,862.2 1113.5,859.9 1127.5,862.7 1141.5,865.0 1154.5,870.1 1168.5,863.7 1182.5,858.5 1195.5,852.8 1209.5,850.9 1223.5,843.8 1236.5,836.8 1250.5,848.1 1264.5,854.7 1277.5,852.2 1291.5,858.6 1305.5,858.0 1319.5,854.5 1332.5,848.1 1346.5,848.1 1360.5,841.9 1373.5,839.7 1387.5,848.1 1401.5,851.6 1414.5,853.0 1428.5,858.4 1442.5,857.6 1455.5,859.9 1469.5,857.9" fill="none" stroke="#ff0000" stroke-width="2.2" stroke-linejoin="round" />
<line x1="1168.3" y1="272.8" x2="1543.6" y2="156.8" stroke="#e60000" stroke-width="2" shape-rendering="crispEdges"/>
<line x1="1167.6" y1="401" x2="1545.6" y2="284.8" stroke="#00a028" stroke-width="2" shape-rendering="crispEdges"/>
<line x1="1389" y1="206.4" x2="1476.1" y2="303" stroke="#1a1a8c" stroke-width="2" shape-rendering="crispEdges"/>
<text x="1777" y="42.2" font-size="12.9" fill="#000" text-anchor="start" textLength="30.0" lengthAdjust="spacingAndGlyphs" >50000</text>
<text x="1777" y="69.2" font-size="12.9" fill="#000" text-anchor="start" textLength="30.0" lengthAdjust="spacingAndGlyphs" >49000</text>
<text x="1777" y="97.2" font-size="12.9" fill="#000" text-anchor="start" textLength="30.0" lengthAdjust="spacingAndGlyphs" >48000</text>
<text x="1777" y="151.2" font-size="12.9" fill="#000" text-anchor="start" textLength="30.0" lengthAdjust="spacingAndGlyphs" >46000</text>
<text x="1777" y="179.2" font-size="12.9" fill="#000" text-anchor="start" textLength="30.0" lengthAdjust="spacingAndGlyphs" >45000</text>
<text x="1777" y="206.2" font-size="12.9" fill="#000" text-anchor="start" textLength="30.0" lengthAdjust="spacingAndGlyphs" >44000</text>
<text x="1777" y="234.2" font-size="12.9" fill="#000" text-anchor="start" textLength="30.0" lengthAdjust="spacingAndGlyphs" >43000</text>
<text x="1777" y="261.2" font-size="12.9" fill="#000" text-anchor="start" textLength="30.0" lengthAdjust="spacingAndGlyphs" >42000</text>
<text x="1777" y="289.2" font-size="12.9" fill="#000" text-anchor="start" textLength="30.0" lengthAdjust="spacingAndGlyphs" >41000</text>
<text x="1777" y="316.2" font-size="12.9" fill="#000" text-anchor="start" textLength="30.0" lengthAdjust="spacingAndGlyphs" >40000</text>
<text x="1777" y="343.2" font-size="12.9" fill="#000" text-anchor="start" textLength="30.0" lengthAdjust="spacingAndGlyphs" >39000</text>
<text x="1777" y="371.2" font-size="12.9" fill="#000" text-anchor="start" textLength="30.0" lengthAdjust="spacingAndGlyphs" >38000</text>
<text x="1777" y="398.2" font-size="12.9" fill="#000" text-anchor="start" textLength="30.0" lengthAdjust="spacingAndGlyphs" >37000</text>
<text x="1777" y="426.2" font-size="12.9" fill="#000" text-anchor="start" textLength="30.0" lengthAdjust="spacingAndGlyphs" >36000</text>
<text x="1777" y="453.2" font-size="12.9" fill="#000" text-anchor="start" textLength="30.0" lengthAdjust="spacingAndGlyphs" >35000</text>
<text x="1777" y="481.2" font-size="12.9" fill="#000" text-anchor="start" textLength="30.0" lengthAdjust="spacingAndGlyphs" >34000</text>
<text x="1777" y="508.2" font-size="12.9" fill="#000" text-anchor="start" textLength="30.0" lengthAdjust="spacingAndGlyphs" >33000</text>
<text x="1777" y="554.2" font-size="12.9" fill="#000" text-anchor="start" textLength="30.0" lengthAdjust="spacingAndGlyphs" >12000</text>
<text x="1777" y="575.2" font-size="12.9" fill="#000" text-anchor="start" textLength="30.0" lengthAdjust="spacingAndGlyphs" >10000</text>
<text x="1777" y="596.2" font-size="12.9" fill="#000" text-anchor="start" textLength="24.0" lengthAdjust="spacingAndGlyphs" >8000</text>
<text x="1777" y="617.2" font-size="12.9" fill="#000" text-anchor="start" textLength="24.0" lengthAdjust="spacingAndGlyphs" >6000</text>
<text x="1777" y="638.2" font-size="12.9" fill="#000" text-anchor="start" textLength="24.0" lengthAdjust="spacingAndGlyphs" >4000</text>
<text x="1777" y="658.2" font-size="12.9" fill="#000" text-anchor="start" textLength="24.0" lengthAdjust="spacingAndGlyphs" >2000</text>
<text x="1777" y="746.2" font-size="12.9" fill="#000" text-anchor="start" textLength="18.0" lengthAdjust="spacingAndGlyphs" >960</text>
<text x="1777" y="766.2" font-size="12.9" fill="#000" text-anchor="start" textLength="18.0" lengthAdjust="spacingAndGlyphs" >480</text>
<text x="1777" y="786.2" font-size="12.9" fill="#000" text-anchor="start" textLength="6.0" lengthAdjust="spacingAndGlyphs" >0</text>
<text x="1777" y="825.2" font-size="12.9" fill="#000" text-anchor="start" textLength="12.0" lengthAdjust="spacingAndGlyphs" >90</text>
<text x="1777" y="845.2" font-size="12.9" fill="#000" text-anchor="start" textLength="12.0" lengthAdjust="spacingAndGlyphs" >70</text>
<text x="1777" y="865.2" font-size="12.9" fill="#000" text-anchor="start" textLength="12.0" lengthAdjust="spacingAndGlyphs" >50</text>
<text x="1777" y="885.2" font-size="12.9" fill="#000" text-anchor="start" textLength="12.0" lengthAdjust="spacingAndGlyphs" >30</text>
<rect x="1756" y="113" width="60" height="16" fill="#ffb84d"/>
<text x="1759.4" y="126" font-size="14.5" fill="#000" text-anchor="start" textLength="51.8" lengthAdjust="spacingAndGlyphs" >47220.87</text>
<rect x="1756" y="288" width="112" height="15" fill="#94d8ff"/>
<text x="1823.3" y="299.6" font-size="14" fill="#000" text-anchor="start" textLength="34.2" lengthAdjust="spacingAndGlyphs" >40850</text>
<rect x="1429" y="531" width="72" height="16" fill="#ff9900"/>
<text x="1433.2" y="544.2" font-size="14" fill="#000" text-anchor="start" textLength="61.3" lengthAdjust="spacingAndGlyphs" >12/09/2021</text>
<text x="1709" y="546.8" font-size="12" fill="#3a3aff" text-anchor="start" textLength="37" lengthAdjust="spacingAndGlyphs" >Volume</text>
<text x="21.4" y="53.1" font-size="19" fill="#787878" text-anchor="start" textLength="74.9" lengthAdjust="spacingAndGlyphs" >FxG.co.il</text>
<text x="102.5" y="53.1" font-size="19" fill="#787878" text-anchor="start" textLength="6.2" lengthAdjust="spacingAndGlyphs" >-</text>
<text x="115" y="53.1" font-size="19" fill="#787878" text-anchor="start" textLength="125" lengthAdjust="spacingAndGlyphs" style="unicode-bidi:bidi-override;direction:ltr">ינכט חותינ תנכות</text>
<text x="25.6" y="501.7" font-size="12.8" fill="#008000" text-anchor="start" textLength="53.3" lengthAdjust="spacingAndGlyphs" style="unicode-bidi:bidi-override;direction:ltr">(1 הרוצת)</text>
<text x="25.2" y="522" font-size="14" fill="#000" text-anchor="start" textLength="59.3" lengthAdjust="spacingAndGlyphs" >00258012</text>
<text x="91.0" y="522" font-size="14" fill="#000" text-anchor="start" >:</text>
<text x="97.3" y="522" font-size="14" fill="#000" text-anchor="start" textLength="61.7" lengthAdjust="spacingAndGlyphs" style="unicode-bidi:bidi-override;direction:ltr">פורג ןארידת</text>
<rect x="20" y="714" width="313" height="20" fill="#ffffff"/>
<rect x="251" y="714" width="1" height="20" fill="#a4a4a4" shape-rendering="crispEdges"/>
<rect x="19" y="721" width="4" height="1" fill="#9a9a9a" shape-rendering="crispEdges"/>
<text x="25.5" y="728.9" font-size="11" fill="#6b6b6b" text-anchor="start" textLength="101.5" lengthAdjust="spacingAndGlyphs" >MACD 26/12: 681.07</text>
<text x="140.8" y="728.9" font-size="11" fill="#e8383d" text-anchor="start" textLength="71.3" lengthAdjust="spacingAndGlyphs" >9 EMA: 832.02</text>
<text x="227.4" y="728.9" font-size="11" fill="#e8383d" text-anchor="start" textLength="97" lengthAdjust="spacingAndGlyphs" >Histogram:-150.95</text>
<text x="25.5" y="836.8" font-size="11" fill="#f0503c" text-anchor="start" textLength="66.6" lengthAdjust="spacingAndGlyphs" >RSI 13: 53.49</text>
<text x="106.2" y="836.8" font-size="11" fill="#000" text-anchor="start" textLength="86.6" lengthAdjust="spacingAndGlyphs" >RSI-MA 13: 59.39</text>
<text x="826" y="697" font-size="12" fill="#000" text-anchor="middle" style="unicode-bidi:bidi-override;direction:ltr">לוי</text>
<text x="1647" y="697" font-size="12" fill="#000" text-anchor="middle" style="unicode-bidi:bidi-override;direction:ltr">קוא</text>
<g shape-rendering="crispEdges">
<rect x="0" y="0" width="1872" height="2" fill="#2f66c6"/>
<rect x="0" y="917" width="1872" height="2" fill="#2f66c6"/>
<rect x="0" y="0" width="2" height="919" fill="#2f66c6"/>
<rect x="1870" y="0" width="2" height="919" fill="#2f66c6"/>
</g>
</svg></body></html>
